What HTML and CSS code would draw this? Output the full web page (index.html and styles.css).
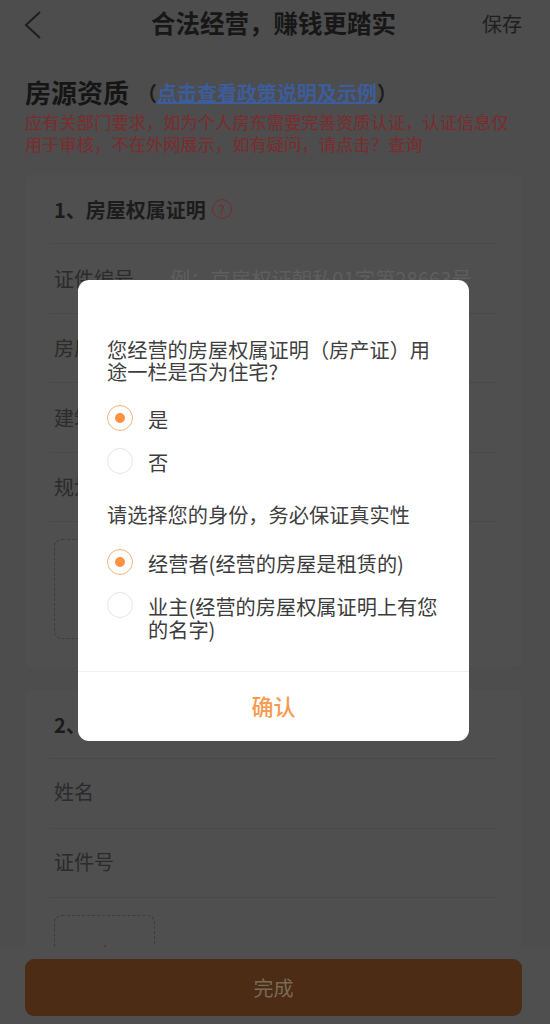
FILE: index.html
```html
<!DOCTYPE html>
<html lang="zh-CN">
<head>
<meta charset="utf-8">
<title>合法经营&#xFF0C;赚钱更踏实</title>
<link rel="stylesheet" href="styles.css">
</head>
<body>
<div class="page">
  <header class="topbar">
    <svg class="back" width="18" height="30" viewBox="0 0 18 30"><path d="M16 2 2 15l14 13" fill="none" stroke="#1f1f1f" stroke-width="2"/></svg>
    <h1 class="topbar-title">合法经营&#xFF0C;赚钱更踏实</h1>
    <span class="save">保存</span>
  </header>
  <main class="content">
    <div class="heading"><h2 class="heading-title">房源资质</h2><span class="heading-note">&#xFF08;<a class="policy">点击查看政策说明及示例</a>&#xFF09;</span></div>
    <p class="notice">应有关部门要求&#xFF0C;如为个人房东需要完善资质认证&#xFF0C;认证信息仅用于审核&#xFF0C;不在外网展示&#xFF0C;如有疑问&#xFF0C;请点击&#xFF1F;查询</p>
    <section class="card card-first">
      <div class="card-title">1、房屋权属证明<span class="help">?</span></div>
      <div class="row"><span class="row-label">证件编号</span><span class="row-hint">例&#xFF1A;京房权证朝私01字第28663号</span></div>
      <div class="row"><span class="row-label">房屋坐落</span></div>
      <div class="row"><span class="row-label">建筑面积</span></div>
      <div class="row"><span class="row-label">规划用途</span></div>
      <div class="upload"></div>
    </section>
    <section class="card card-second">
      <div class="card-title">2、身份证明</div>
      <div class="row"><span class="row-label">姓名</span></div>
      <div class="row"><span class="row-label">证件号</span></div>
      <div class="upload"><span class="plus"></span></div>
    </section>
  </main>
  <footer class="footer"><button class="done">完成</button></footer>
  <div class="dialog">
    <div class="dialog-body">
      <p class="question">您经营的房屋权属证明&#xFF08;房产证&#xFF09;用途一栏是否为住宅?</p>
      <div class="option option-gap"><span class="radio radio-on"></span><span class="option-text">是</span></div>
      <div class="option"><span class="radio"></span><span class="option-text">否</span></div>
      <p class="question question-second">请选择您的身份&#xFF0C;务必保证真实性</p>
      <div class="option option-gap"><span class="radio radio-on"></span><span class="option-text">经营者(经营的房屋是租赁的)</span></div>
      <div class="option"><span class="radio"></span><span class="option-text">业主(经营的房屋权属证明上有您的名字)</span></div>
    </div>
    <div class="confirm">确认</div>
  </div>
</div>
</body>
</html>
```
FILE: styles.css
```css
* { box-sizing: border-box; }
html, body { margin: 0; padding: 0; }
body { font-family: "Noto Sans CJK SC", "Noto Sans", sans-serif; background: #4c4d4c; }
.page { position: relative; width: 550px; height: 1024px; overflow: hidden; background: #4c4d4c; color: #262626; }
.topbar { height: 52px; padding: 0 28px 6px 24px; display: flex; align-items: center; justify-content: space-between; }
.back { flex: none; margin-top: 4px; }
.topbar-title { margin: 0 0 0 23px; font-size: 24.5px; line-height: 30px; font-weight: 700; color: #171717; }
.save { font-size: 20px; color: #1f1f1f; }
.content { padding: 24px 28px 0 25px; }
.heading { display: flex; align-items: center; height: 32px; }
.heading-title { margin: 0; font-size: 26px; line-height: 32px; font-weight: 700; color: #151515; }
.heading-note { margin-left: 8px; font-size: 20px; font-weight: 700; color: #1c1c1c; }
.policy { color: #3c5c9c; text-decoration: underline; }
.notice { margin: 3px 0 0; font-size: 17.3px; line-height: 22px; color: #7e2b2e; }
.card { margin-bottom: 23px; padding: 0 25px; background: #4e4f4e; border-radius: 6px; width: 497px; }
.card-first { margin-top: 20px; height: 492px; }
.card-title { height: 69px; display: flex; align-items: center; padding-left: 4px; font-size: 20px; font-weight: 700; color: #1c1c1c; border-bottom: 1px solid #484948; }
.help { width: 20px; height: 20px; margin-left: 6px; border: 1.5px solid #7a2c2c; border-radius: 50%; display: flex; align-items: center; justify-content: center; font-size: 13px; font-weight: 400; color: #7a2c2c; }
.row { height: 69.5px; display: flex; align-items: center; padding: 0 0 0 4px; border-bottom: 1px solid #484948; }
.card-second .row { padding-bottom: 3px; }
.row-label { width: 116px; font-size: 20px; color: #2b2b2b; }
.row-hint { font-size: 20.3px; color: #5e5e5e; white-space: nowrap; }
.upload { position: relative; width: 101px; height: 100px; margin: 17px 0 0 4px; border: 1px dashed #3d3d3d; border-radius: 8px; }
.plus { position: absolute; left: 49px; top: 29px; width: 2px; height: 5px; background: #6b3413; }
.footer { position: absolute; left: 0; right: 0; bottom: 0; height: 77px; padding: 12px 28px 8px 25px; background: #4e4f4e; }
.done { display: block; width: 100%; height: 57px; border: 0; border-radius: 9px; background: #4c2c14; color: #7a6a58; font-family: inherit; font-size: 20px; }
.dialog { position: absolute; left: 78px; top: 280px; width: 391px; height: 461px; background: #fff; border-radius: 11px; display: flex; flex-direction: column; }
.dialog-body { flex: 1; padding: 59px 29px 0; }
.question { margin: 0; font-size: 20.2px; line-height: 21.5px; color: #3f3f3f; }
.question-second { margin-top: 30px; }
.option { display: flex; align-items: flex-start; gap: 15px; min-height: 26px; margin-top: 17px; font-size: 20.2px; line-height: 23px; color: #3c3c3c; }
.option-gap { margin-top: 23px; }
.option-text { padding-top: 3px; }
.radio { flex: none; width: 26px; height: 26px; border: 1px solid #e6e6e6; border-radius: 50%; display: flex; align-items: center; justify-content: center; }
.radio-on { border-color: #f4b27a; }
.radio-on::before { content: ""; width: 10px; height: 10px; border-radius: 50%; background: #fd9240; }
.confirm { height: 70px; flex: none; border-top: 1px solid #efefef; padding-bottom: 3px; display: flex; align-items: center; justify-content: center; font-size: 22px; font-weight: 500; color: #f79a4f; }
```
